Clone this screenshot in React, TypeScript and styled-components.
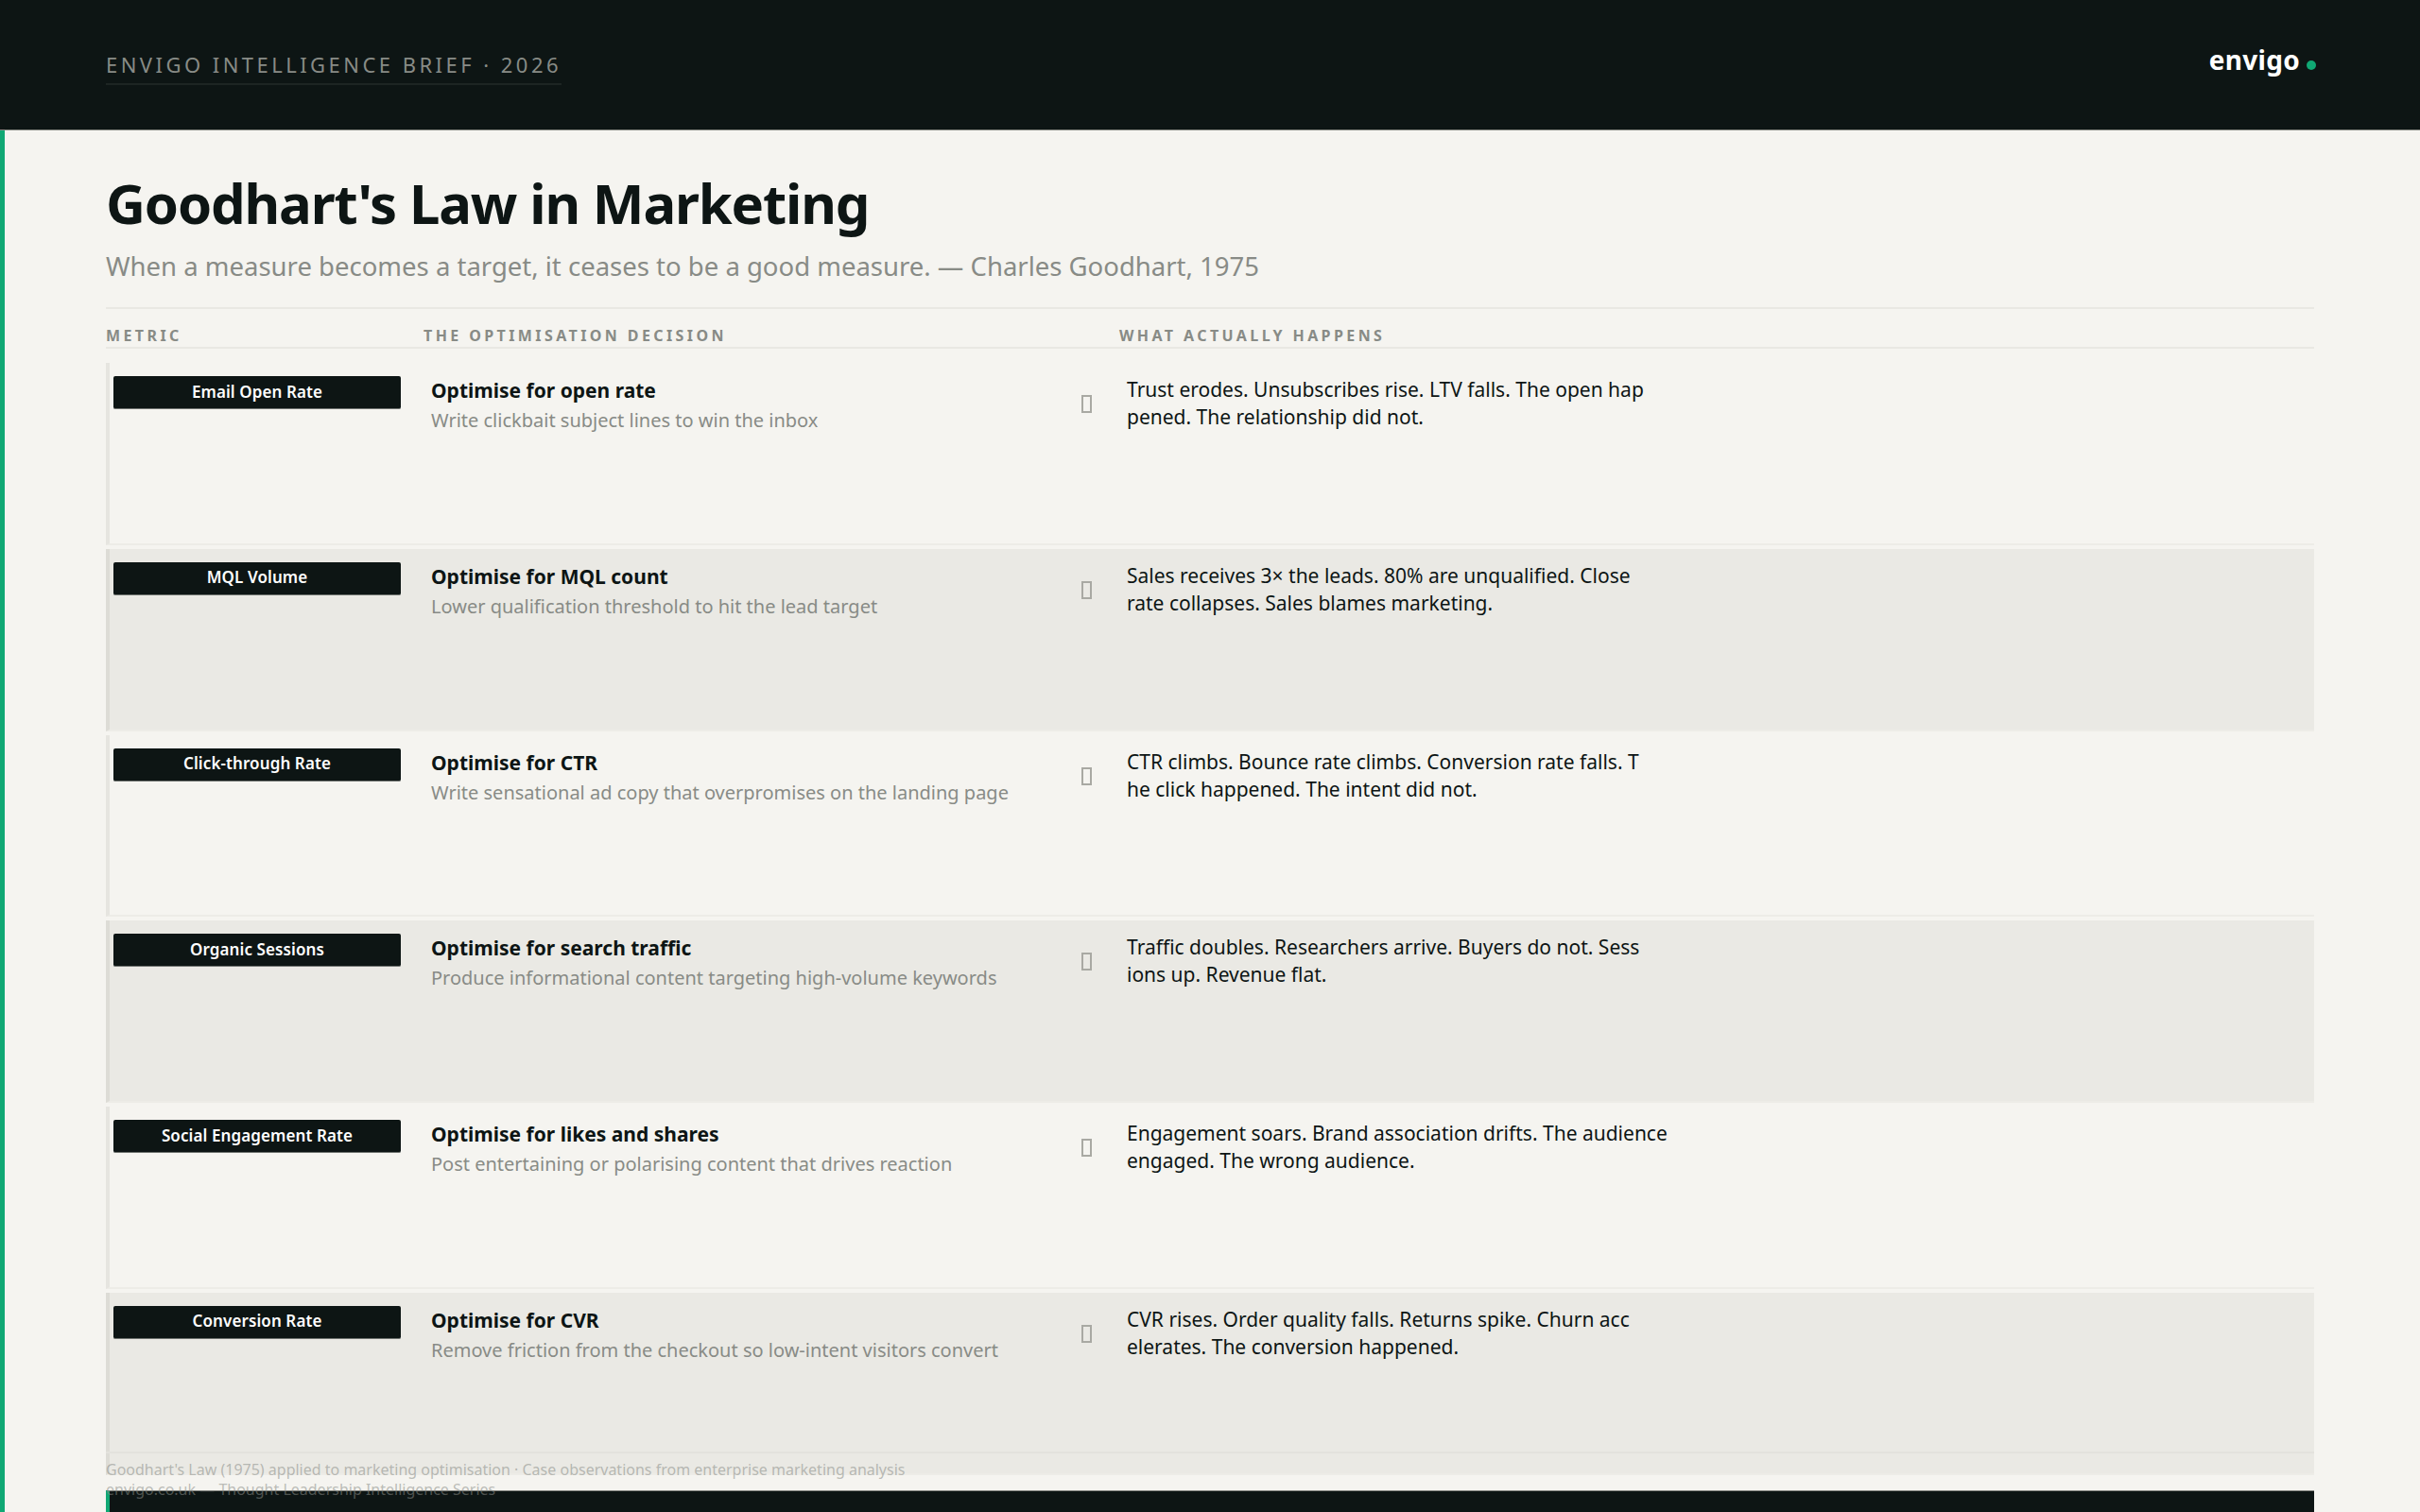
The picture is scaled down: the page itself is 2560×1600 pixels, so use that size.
import { createGlobalStyle } from "styled-components"
import styled from "styled-components"

const rows = [
    {
        metric: "Email Open Rate",
        decision: "Optimise for open rate",
        detail: "Write clickbait subject lines to win the inbox",
        outcome: ["Trust erodes. Unsubscribes rise. LTV falls. The open hap", "pened. The relationship did not."],
    },
    {
        metric: "MQL Volume",
        decision: "Optimise for MQL count",
        detail: "Lower qualification threshold to hit the lead target",
        outcome: ["Sales receives 3× the leads. 80% are unqualified. Close", "rate collapses. Sales blames marketing."],
    },
    {
        metric: "Click-through Rate",
        decision: "Optimise for CTR",
        detail: "Write sensational ad copy that overpromises on the landing page",
        outcome: ["CTR climbs. Bounce rate climbs. Conversion rate falls. T", "he click happened. The intent did not."],
    },
    {
        metric: "Organic Sessions",
        decision: "Optimise for search traffic",
        detail: "Produce informational content targeting high-volume keywords",
        outcome: ["Traffic doubles. Researchers arrive. Buyers do not. Sess", "ions up. Revenue flat."],
    },
    {
        metric: "Social Engagement Rate",
        decision: "Optimise for likes and shares",
        detail: "Post entertaining or polarising content that drives reaction",
        outcome: ["Engagement soars. Brand association drifts. The audience", "engaged. The wrong audience."],
    },
    {
        metric: "Conversion Rate",
        decision: "Optimise for CVR",
        detail: "Remove friction from the checkout so low-intent visitors convert",
        outcome: ["CVR rises. Order quality falls. Returns spike. Churn acc", "elerates. The conversion happened."],
    },
]

export default function App() {
    return (
        <>
            <GlobalStyle />
            <Page>
                <TopBar>
                    <BriefLabel>ENVIGO INTELLIGENCE BRIEF · 2026</BriefLabel>
                    <Logo>envigo<LogoDot /></Logo>
                </TopBar>
                <Main>
                    <Title>Goodhart's Law in Marketing</Title>
                    <Subtitle>When a measure becomes a target, it ceases to be a good measure. — Charles Goodhart, 1975</Subtitle>
                    <TableHead>
                        <HeadCell>METRIC</HeadCell>
                        <HeadCell>THE OPTIMISATION DECISION</HeadCell>
                        <HeadCell>WHAT ACTUALLY HAPPENS</HeadCell>
                    </TableHead>
                    <Rows>
                        {rows.map((row, index) => (
                            <Row key={row.metric} $alt={index % 2 === 1}>
                                <Chip>{row.metric}</Chip>
                                <Decision>
                                    <DecisionTitle>{row.decision}</DecisionTitle>
                                    <DecisionDetail>{row.detail}</DecisionDetail>
                                </Decision>
                                <Tofu />
                                <Outcome>
                                    {row.outcome.map((line) => (
                                        <OutcomeLine key={line}>{line}</OutcomeLine>
                                    ))}
                                </Outcome>
                            </Row>
                        ))}
                    </Rows>
                    <FooterNote>
                        <div>Goodhart's Law (1975) applied to marketing optimisation · Case observations from enterprise marketing analysis</div>
                        <div>envigo.co.uk — Thought Leadership Intelligence Series</div>
                    </FooterNote>
                    <NextBar />
                </Main>
            </Page>
        </>
    )
}

const GlobalStyle = createGlobalStyle`
    html, body {
        margin: 0;
        padding: 0;
        background: #f5f4f0;
    }
    * {
        box-sizing: border-box;
    }
`

const Page = styled.div`
    width: 2560px;
    height: 1600px;
    overflow: hidden;
    display: flex;
    flex-direction: column;
    background: #f5f4f0;
    font-family: "Noto Sans", sans-serif;
    color: #0d1514;
`

const TopBar = styled.header`
    height: 138px;
    flex-shrink: 0;
    display: flex;
    align-items: flex-start;
    justify-content: space-between;
    padding: 53px 110px 0 112px;
    background: #0d1514;
    border-bottom: 1px solid #83857f;
`

const BriefLabel = styled.div`
    font-size: 22px;
    line-height: 30px;
    letter-spacing: 3.46px;
    color: #888b86;
    padding-bottom: 5px;
    border-bottom: 2px solid #1d2523;
`

const Logo = styled.div`
    display: flex;
    align-items: baseline;
    gap: 7px;
    margin-top: -10px;
    font-size: 28px;
    line-height: 40px;
    font-weight: 700;
    letter-spacing: 0.3px;
    color: #ffffff;
`

const LogoDot = styled.span`
    width: 10px;
    height: 10px;
    border-radius: 50%;
    background: #10a874;
`

const Main = styled.main`
    position: relative;
    flex: 1;
    border-left: 5px solid #10a874;
    padding: 0 112px 0 107px;
`

const Title = styled.h1`
    margin: 0;
    padding-top: 39px;
    font-size: 58px;
    line-height: 76px;
    font-weight: 700;
    letter-spacing: -1.16px;
    color: #0d1514;
`

const Subtitle = styled.div`
    margin-top: 10px;
    padding-bottom: 24px;
    font-size: 27.5px;
    line-height: 38px;
    color: #888b86;
    border-bottom: 2px solid #e9e8e3;
`

const TableHead = styled.div`
    display: grid;
    grid-template-columns: 336px 736px 1fr;
    height: 42px;
    align-items: center;
    padding-top: 16px;
    border-bottom: 2px solid #e9e8e3;
`

const HeadCell = styled.div`
    font-size: 16px;
    line-height: 24px;
    font-weight: 700;
    letter-spacing: 3.4px;
    color: #888b86;
`

const Rows = styled.div`
    display: grid;
    grid-auto-rows: 192.8px;
    row-gap: 4px;
    margin-top: 15px;
`

const Row = styled.div<{ $alt: boolean }>`
    display: grid;
    grid-template-columns: 336px 688px 48px 1fr;
    align-items: start;
    padding: 14px 0 0 4px;
    background: ${(props) => (props.$alt ? "#eae9e4" : "transparent")};
    border-left: 4px solid ${(props) => (props.$alt ? "#dddcd6" : "#e6e5e0")};
    border-bottom: 2px solid #edece7;
`

const Chip = styled.div`
    width: 304px;
    height: 35px;
    display: flex;
    align-items: center;
    justify-content: center;
    padding-bottom: 1px;
    border-radius: 2px;
    border-bottom: 1px solid #6f7370;
    background: #0d1514;
    color: #ffffff;
    font-size: 17px;
    line-height: 24px;
    font-weight: 600;
    letter-spacing: 0.1px;
`

const Decision = styled.div`
    display: flex;
    flex-direction: column;
`

const DecisionTitle = styled.div`
    font-size: 21px;
    line-height: 30px;
    font-weight: 700;
    color: #0d1514;
`

const DecisionDetail = styled.div`
    margin-top: 2px;
    font-size: 20px;
    line-height: 30px;
    color: #888b86;
`

const Tofu = styled.span`
    display: block;
    width: 11px;
    height: 19px;
    margin-top: 20px;
    border: 2px solid #a9a9a3;
`

const Outcome = styled.div`
    display: flex;
    flex-direction: column;
`

const OutcomeLine = styled.div`
    font-size: 21px;
    line-height: 29px;
    font-weight: 400;
    color: #0d1514;
`

const FooterNote = styled.div`
    position: absolute;
    left: 107px;
    top: 1398px;
    width: 2336px;
    padding-top: 7px;
    border-top: 2px solid #e3e2dd;
    font-size: 16px;
    line-height: 21px;
    color: rgba(136, 139, 134, 0.55);
    z-index: 2;
`

const NextBar = styled.div`
    position: absolute;
    left: 107px;
    top: 1439px;
    width: 2336px;
    height: 30px;
    background: #0d1514;
    border-top: 1px solid #8a8a85;
    border-left: 4px solid #10a874;
`
